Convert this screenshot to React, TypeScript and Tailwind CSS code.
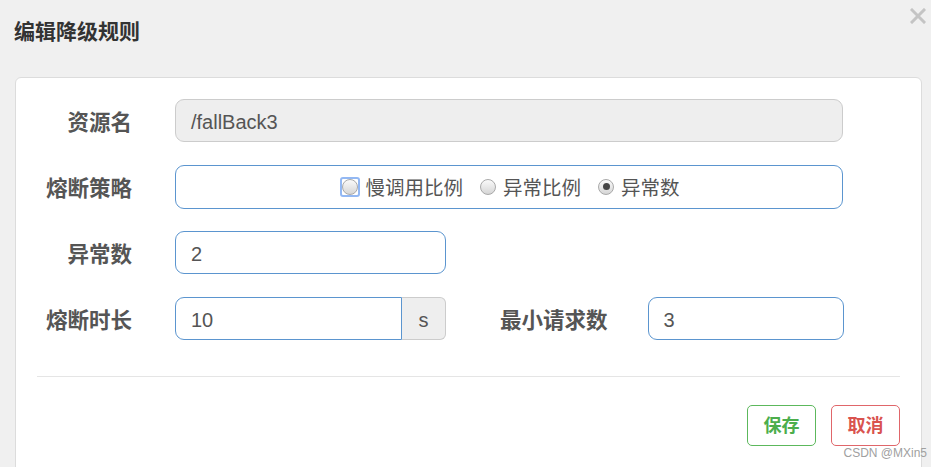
import React from "react";

const font = { fontFamily: '"Liberation Sans", "Noto Sans CJK SC", sans-serif' };

function Radio({ label, checked, focused }: { label: string; checked?: boolean; focused?: boolean }) {
  const dot = (
    <span className="w-[16px] h-[16px] rounded-full border border-[#a9a9a9] bg-gradient-to-b from-[#fafafa] to-[#d6d6d6] flex items-center justify-center">
      {checked && <span className="w-[7px] h-[7px] rounded-full bg-[#444]" />}
    </span>
  );
  return (
    <label className="flex items-center gap-[5px]">
      {focused ? (
        <span className="w-[20px] h-[20px] rounded-[3px] border-2 border-[#93b8f3] flex items-center justify-center">{dot}</span>
      ) : (
        <span className="w-[20px] h-[20px] flex items-center justify-center">{dot}</span>
      )}
      <span className="text-[19.5px] text-[#555] leading-none pt-[5px]">{label}</span>
    </label>
  );
}

function Label({ children }: { children: React.ReactNode }) {
  return <div className="w-[116px] text-right text-[21.5px] font-bold text-[#555] shrink-0 pt-[6px]">{children}</div>;
}

export default function App() {
  return (
    <div className="min-h-screen h-[467px] bg-[#f0f0f0] relative overflow-hidden" style={font}>
      <div className="h-[77px] pl-[14px] pt-[18px]">
        <h4 className="text-[21px] font-bold text-[#333] leading-[28px]">编辑降级规则</h4>
      </div>
      <button className="absolute top-[8px] right-[5px] w-[16px] h-[16px]">
        <svg viewBox="0 0 16 16" className="w-[16px] h-[16px]">
          <path d="M2 2 L14 14 M14 2 L2 14" stroke="#c4c4c4" strokeWidth="3" strokeLinecap="square" />
        </svg>
      </button>

      <div className="ml-[15px] mr-[9px] h-[420px] bg-white border border-[#dcdcdc] rounded-[6px] pt-[21px]">
        <div className="flex items-center h-[43px] mb-[23px]">
          <Label>资源名</Label>
          <div className="ml-[43px] w-[668px] h-[43px] rounded-[9px] border border-[#ccc] bg-[#eee] flex items-center px-[15px] pt-[2px] text-[20px] text-[#555]">
            /fallBack3
          </div>
        </div>

        <div className="flex items-center h-[43px] mb-[23px]">
          <Label>熔断策略</Label>
          <div className="ml-[43px] w-[668px] h-[44px] rounded-[9px] border border-[#5b95cf] bg-white flex items-center justify-center gap-[15px] pl-[2px]">
            <Radio label="慢调用比例" focused />
            <Radio label="异常比例" />
            <Radio label="异常数" checked />
          </div>
        </div>

        <div className="flex items-center h-[43px] mb-[23px]">
          <Label>异常数</Label>
          <div className="ml-[43px] w-[271px] h-[43px] rounded-[9px] border border-[#5b95cf] bg-white flex items-center px-[15px] pt-[2px] text-[20px] text-[#555]">
            2
          </div>
        </div>

        <div className="flex items-center h-[43px]">
          <Label>熔断时长</Label>
          <div className="ml-[43px] w-[271px] h-[43px] flex">
            <div className="w-[227px] h-[43px] rounded-l-[9px] border border-[#5b95cf] bg-white flex items-center px-[15px] pt-[2px] text-[20px] text-[#555]">
              10
            </div>
            <div className="w-[44px] h-[43px] rounded-r-[6px] border border-l-0 border-[#ccc] bg-[#eee] flex items-center justify-center pt-[2px] text-[20px] text-[#555]">
              s
            </div>
          </div>
          <div className="ml-[54px] text-[21.5px] font-bold text-[#555] pt-[6px]">最小请求数</div>
          <div className="ml-[40px] w-[196px] h-[43px] rounded-[9px] border border-[#5b95cf] bg-white flex items-center px-[15px] pt-[2px] text-[20px] text-[#555]">
            3
          </div>
        </div>

        <div className="mx-[21px] mt-[36px] border-t border-[#e5e5e5]" />

        <div className="flex justify-end gap-[15px] mr-[21px] mt-[28px]">
          <button className="w-[69px] h-[41px] rounded-[5px] border border-[#5cb85c] text-[#4cae4c] text-[18px] font-bold bg-white pt-[2px]">保存</button>
          <button className="w-[69px] h-[41px] rounded-[5px] border border-[#e0666a] text-[#d9534f] text-[18px] font-bold bg-white pt-[2px]">取消</button>
        </div>
      </div>

      <div className="absolute right-[4px] bottom-[8px] text-[12px] text-[#a0a0a0] leading-none">CSDN @MXin5</div>
    </div>
  );
}
